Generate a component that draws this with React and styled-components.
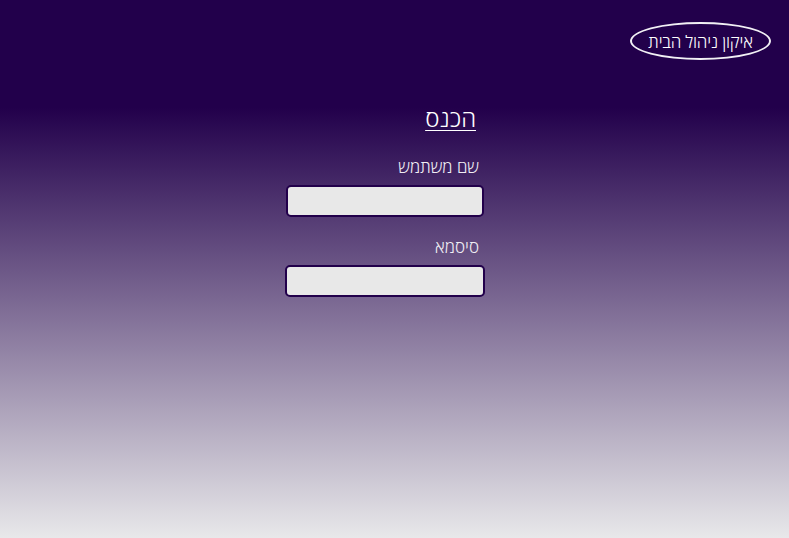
import styled, { createGlobalStyle } from 'styled-components'

const GlobalS = createGlobalStyle`
    html, body {
        margin: 0;
        padding: 0;
        height: 100%;
    }
    body {
        background: linear-gradient(#22004b 20%, #e8e8ea 100%);
        font-family: "Open Sans", "DejaVu Sans", sans-serif;
        font-weight: 300;
        color: #ffffff;
    }
    #root {
        height: 100%;
    }
`
const PageS = styled.div`
    direction: rtl;
    height: 100%;
    box-sizing: border-box;
    padding: 22px 19px 0 0;
`
const HeaderS = styled.header`
    display: flex;
    justify-content: flex-start;
    margin-right: -1px;
`
const LogoS = styled.div`
    width: 137px;
    height: 34px;
    border: 2px solid #f2f0f5;
    border-radius: 50%;
    display: flex;
    align-items: center;
    justify-content: center;
    font-size: 17px;
    color: #ffffff;
    letter-spacing: -0.2px;
`
const FormS = styled.form`
    width: 200px;
    margin: 43px auto 0 auto;
    display: flex;
    flex-direction: column;
`
const TitleS = styled.h1`
    margin: 0 9px 0 0;
    font-size: 24px;
    font-weight: 300;
    text-decoration: underline;
    text-underline-offset: 3px;
    text-decoration-thickness: 1px;
    line-height: 30px;
`
const LabelS = styled.label`
    margin: ${ p => p.$top }px 6px 0 0;
    font-size: 17px;
    line-height: 24px;
    color: #f0eef4;
`
const InputS = styled.input`
    box-sizing: border-box;
    width: ${ p => p.$w }px;
    height: 32px;
    margin: ${ p => p.$top }px ${ p => (200 - p.$w) / 2 }px 0 0;
    background: #e8e8e8;
    border: 2px solid #22004b;
    border-radius: 5px;
    outline: none;
    font-family: inherit;
    font-size: 15px;
`

const App = () => {
    return(
        <>
            <GlobalS />
            <PageS>
                <HeaderS>
                    <LogoS>איקון ניהול הבית</LogoS>
                </HeaderS>
                <FormS>
                    <TitleS>הכנס</TitleS>
                    <LabelS $top={ 22 }>שם משתמש</LabelS>
                    <InputS $w={ 198 } $top={ 6 } type='text' />
                    <LabelS $top={ 18 }>סיסמא</LabelS>
                    <InputS $w={ 200 } $top={ 6 } type='password' />
                </FormS>
            </PageS>
        </>
    )
}
export default App
